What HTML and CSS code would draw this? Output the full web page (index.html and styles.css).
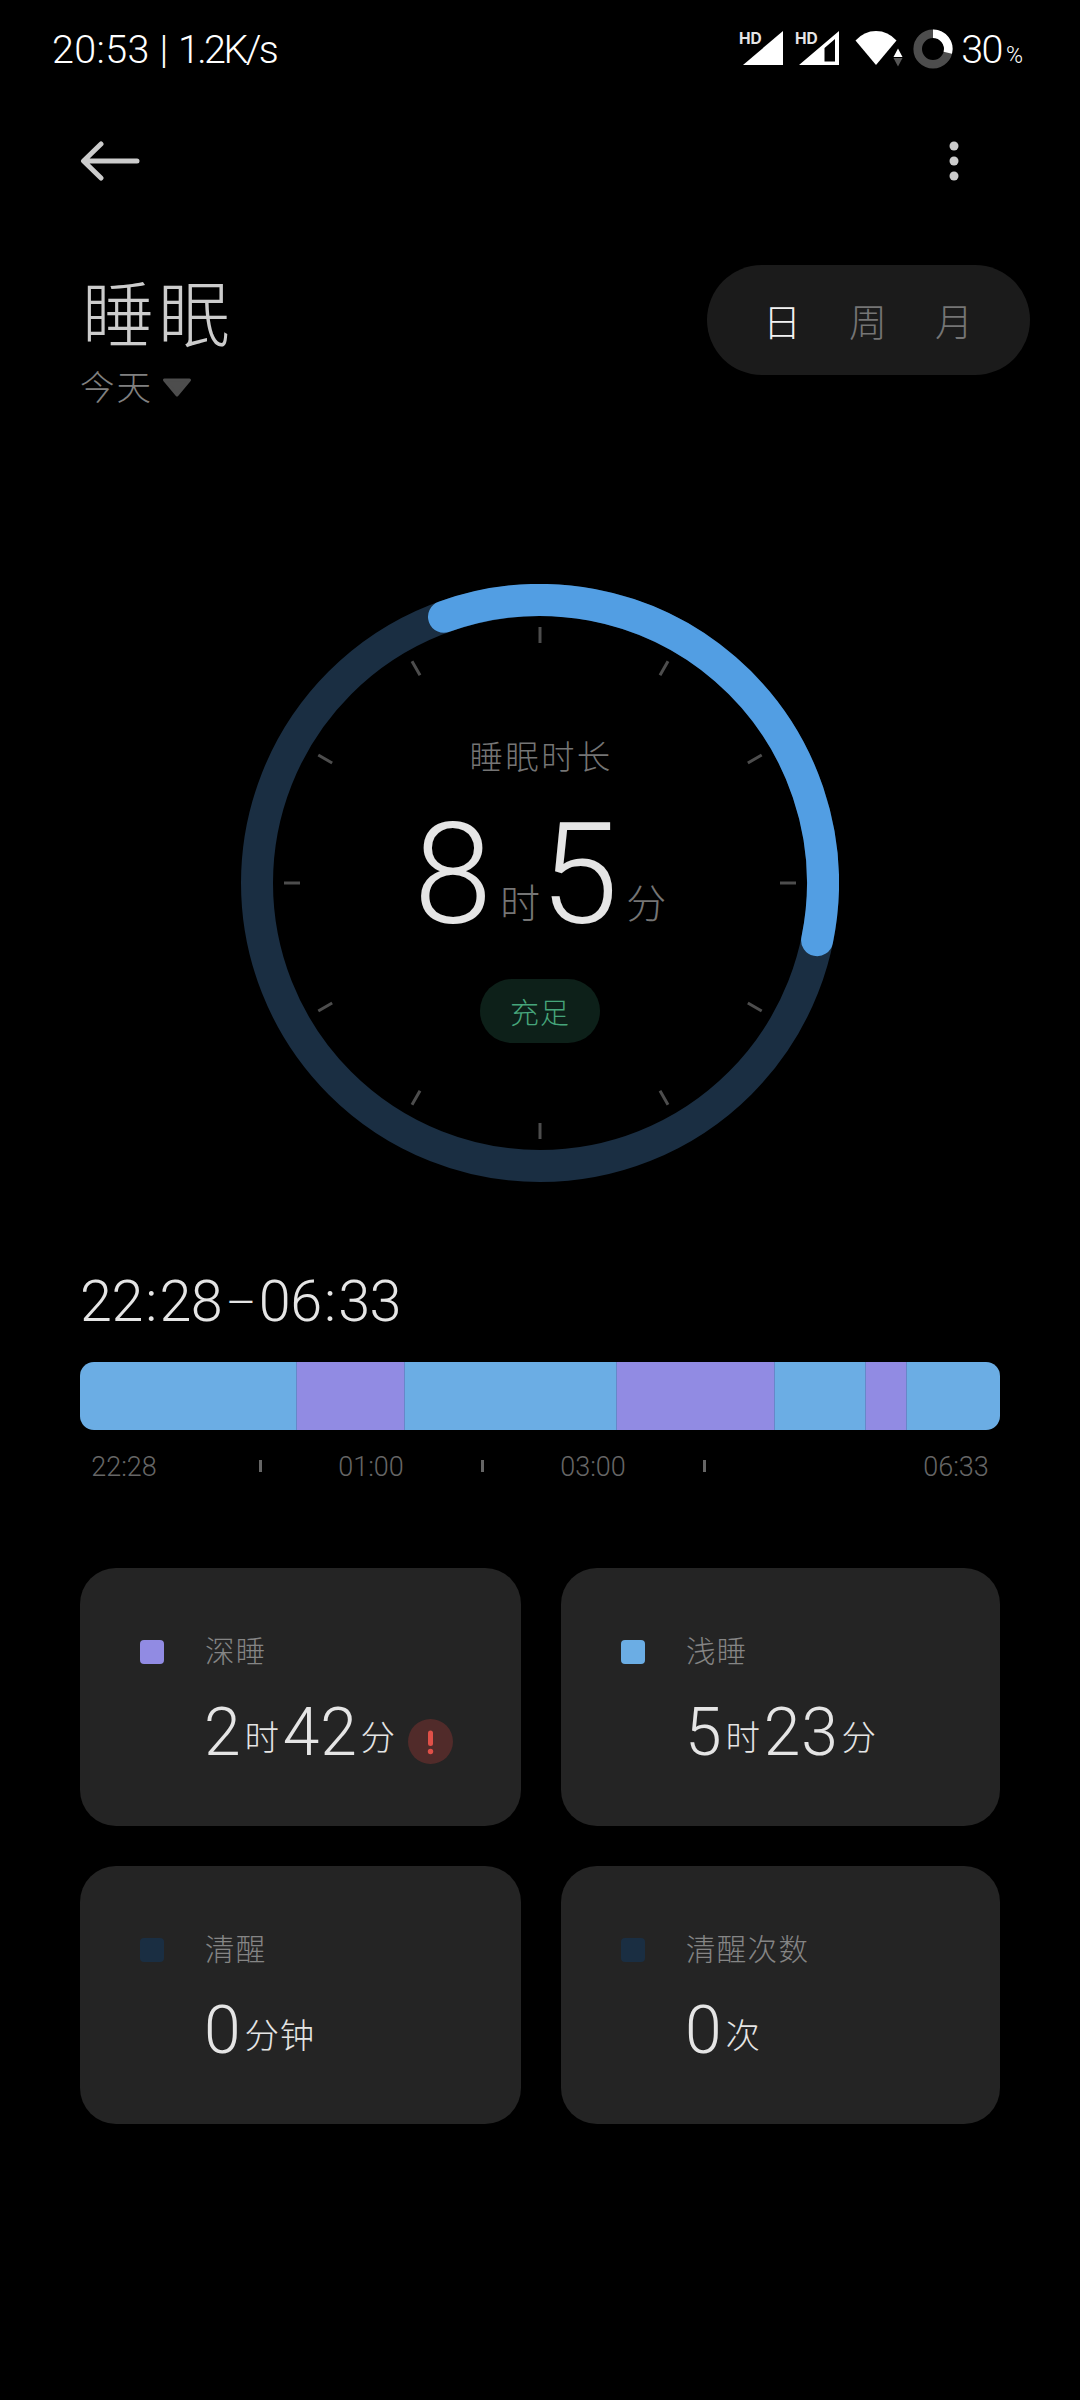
FILE: index.html
```
<!DOCTYPE html>
<html lang="zh-CN">
<head>
<meta charset="utf-8">
<title>睡眠</title>
<link rel="stylesheet" href="styles.css">
</head>
<body>
<div class="status">
  <span class="status-text"><span class="clock">20:53</span> | <span class="speed">1.2K/s</span></span>
  <div class="status-right">
    <svg class="status-icons" width="220" height="100" viewBox="736 0 220 100">
      <text class="hd" x="739" y="44">HD</text>
      <path d="M743 65H783V31Z" fill="#fff"/>
      <text class="hd" x="795" y="44">HD</text>
      <path d="M799 65H839V31ZM824.500 61.500V48L835 39V61.500Z" fill="#fff" fill-rule="evenodd"/>
      <path d="M876 65L855.5 40.5Q864 31 876 31T896.500 40.500Z" fill="#fff"/>
      <path d="M893.500 57L898 48.500L902.500 57Z" fill="#fff"/>
      <path d="M893.500 58L898 66.500L902.500 58Z" fill="#555"/>
      <circle cx="933" cy="49" r="15.300" fill="none" stroke="#4d4d4d" stroke-width="8.600"/>
      <path d="M933 33.700A15.300 15.300 0 0 1 947.800 52.800" fill="none" stroke="#fff" stroke-width="8.600"/>
    </svg>
    <span class="battery">30<small>%</small></span>
  </div>
</div>

<nav class="topbar">
  <svg width="60" height="44" viewBox="80 138.500 60 44"><path d="M101 143.500L83.500 160.500L101 177.500M84 160.500H137" fill="none" stroke="#ccc" stroke-width="5" stroke-linecap="round" stroke-linejoin="round"/></svg>
  <svg width="12" height="44" viewBox="0 0 12 44"><g fill="#ccc"><circle cx="6" cy="7" r="4.500"/><circle cx="6" cy="22" r="4.500"/><circle cx="6" cy="37" r="4.500"/></g></svg>
</nav>

<header class="header">
  <div>
    <h1 class="title">睡眠</h1>
    <div class="date">今天<svg width="30" height="20" viewBox="0 0 30 20"><path d="M2.500 2H27.500L15 17Z" fill="#4d4d4d" stroke="#4d4d4d" stroke-width="3" stroke-linejoin="round"/></svg></div>
  </div>
  <div class="tabs"><span class="tab tab-on">日</span><span class="tab">周</span><span class="tab">月</span></div>
</header>

<section class="dial">
  <svg class="ring" width="598" height="598" viewBox="-299 -299 598 598">
    <circle r="283" fill="none" stroke="#1a2e42" stroke-width="32"/>
    <path d="M-96 -266.200A283 283 0 0 1 277.100 57.200" fill="none" stroke="#529ee3" stroke-width="32" stroke-linecap="round"/>
    <g stroke="#4d4d4d" stroke-width="3">
      <path d="M0 -256V-240M0 240V256M-256 0H-240M240 0H256"/>
      <path d="M0 -256V-240M0 240V256M-256 0H-240M240 0H256" transform="rotate(30)"/>
      <path d="M0 -256V-240M0 240V256M-256 0H-240M240 0H256" transform="rotate(60)"/>
    </g>
  </svg>
  <div class="dial-body">
    <div class="dial-label">睡眠时长</div>
    <div class="dial-value">8<span class="unit">时</span>5<span class="unit">分</span></div>
    <div class="badge">充足</div>
  </div>
</section>

<section class="timeline">
  <div class="range">22<i>:</i>28<b>–</b>06<i>:</i>33</div>
  <div class="bar">
    <span class="seg light" style="width:216px"></span>
    <span class="seg deep" style="width:108px"></span>
    <span class="seg light" style="width:212px"></span>
    <span class="seg deep" style="width:158px"></span>
    <span class="seg light" style="width:91px"></span>
    <span class="seg deep" style="width:41px"></span>
    <span class="seg light" style="width:94px"></span>
  </div>
  <div class="axis">
    <span>22:28</span><span class="tick"></span><span>01:00</span><span class="tick"></span><span>03:00</span><span class="tick"></span><span>06:33</span>
  </div>
</section>

<section class="cards">
  <div class="card">
    <i class="dot deep"></i><div class="name">深睡</div>
    <div class="value"><span>2<small>时</small>42<small>分</small></span>
      <svg class="warn" width="45" height="45" viewBox="0 0 45 45"><circle cx="22.500" cy="22.500" r="22.500" fill="#512b2a"/><path d="M22.500 14V24.500" stroke="#e05048" stroke-width="5" stroke-linecap="round"/><circle cx="22.500" cy="32.500" r="2.700" fill="#e05048"/></svg>
    </div>
  </div>
  <div class="card">
    <i class="dot light"></i><div class="name">浅睡</div>
    <div class="value"><span>5<small>时</small>23<small>分</small></span></div>
  </div>
  <div class="card">
    <i class="dot awake"></i><div class="name">清醒</div>
    <div class="value"><span>0<small>分钟</small></span></div>
  </div>
  <div class="card">
    <i class="dot awake"></i><div class="name">清醒次数</div>
    <div class="value"><span>0<small>次</small></span></div>
  </div>
</section>
</body>
</html>
```
FILE: styles.css
```
* { box-sizing: border-box; }
body {
  margin: 0;
  width: 1080px;
  height: 2400px;
  overflow: hidden;
  background: #000;
  color: #e5e5e5;
  font-family: Roboto, "Noto Sans CJK SC", sans-serif;
  font-weight: 300;
}
svg { display: block; flex: none; }
i, b { font-style: normal; font-weight: inherit; }

.status {
  display: flex;
  justify-content: space-between;
  height: 100px;
  padding: 0 57px 0 52px;
  color: #fff;
  font-size: 39.5px;
  line-height: 99px;
}
.clock { letter-spacing: 0.4px; }
.speed { letter-spacing: -2.6px; }
.status-right { display: flex; height: 100px; }
.hd { font: 700 15.5px Inter, sans-serif; fill: #e5e5e5; }
.battery { padding-left: 5px; letter-spacing: -1.5px; }
.battery small { font-size: 23px; line-height: 1; padding-left: 4px; letter-spacing: 0; }

.topbar {
  display: flex;
  justify-content: space-between;
  align-items: center;
  height: 121px;
  padding: 0 120px 0 80px;
}

.header {
  display: flex;
  justify-content: space-between;
  align-items: flex-start;
  padding: 44px 50px 0 80px;
  height: 192px;
}
.title {
  margin: 0;
  padding: 6px 0 0 2px;
  color: #ccc;
  font-size: 72px;
  font-weight: 300;
  line-height: 92px;
  letter-spacing: 4px;
}
.date {
  display: flex;
  align-items: center;
  gap: 9px;
  margin-top: -3px;
  color: #808080;
  font-size: 34.5px;
  line-height: 56px;
  letter-spacing: 2px;
}
.tabs {
  display: flex;
  justify-content: center;
  width: 323px;
  height: 110px;
  padding-right: 1px;
  border-radius: 55px;
  background: #1b1b1b;
}
.tab {
  width: 86px;
  text-align: center;
  color: #757575;
  font-size: 38px;
  line-height: 117px;
  height: 110px;
}
.tab-on { color: #f2f2f2; }

.dial {
  display: grid;
  justify-content: center;
  margin-top: 171px;
}
.ring, .dial-body { grid-area: 1 / 1; }
.dial-body {
  display: flex;
  flex-direction: column;
  align-items: center;
  padding-top: 154px;
}
.dial-label {
  color: #757575;
  font-size: 33.5px;
  line-height: 40px;
  letter-spacing: 2.3px;
  margin-right: -2px;
}
.dial-value {
  margin-top: 36px;
  font-size: 141px;
  line-height: 121px;
  height: 120px;
  white-space: nowrap;
}
.unit {
  color: #757575;
  font-size: 40px;
  line-height: 1;
  margin-left: 8px;
  vertical-align: 5px;
}
.badge {
  display: flex;
  justify-content: center;
  width: 120px;
  height: 64px;
  margin-top: 45px;
  border-radius: 32px;
  background: #0d2019;
  color: #46a57b;
  font-size: 29px;
  line-height: 70px;
  letter-spacing: 1px;
}

.timeline { padding: 0 80px; margin-top: 81px; }
.range {
  height: 76px;
  font-size: 57.500px;
  line-height: 77px;
  letter-spacing: -0.5px;
}
.range i { padding: 0 2.5px; }
.range b { font-size: 47px; line-height: 1; padding: 0 3px 0 3.5px; vertical-align: 2px; }
.bar {
  display: flex;
  height: 68px;
  margin-top: 23px;
  border-radius: 14px;
  overflow: hidden;
}
.seg + .seg { box-shadow: inset 1px 0 0 #6787c9; }
.light { background: #6bade4; }
.deep { background: #918be3; }
.awake { background: #1a2e42; }
.axis {
  display: flex;
  gap: 23px;
  margin-top: 20px;
  color: #666;
  font-size: 27px;
  line-height: 34px;
  height: 34px;
}
.axis span { width: 88px; text-align: center; }
.axis span:first-child { margin-right: 25px; }
.axis span:last-child { margin-left: auto; }
.axis .tick {
  height: 12px;
  margin-top: 10px;
  background: linear-gradient(#666, #666) center / 3px 12px no-repeat;
}

.cards {
  display: grid;
  grid-template-columns: 441px 439px;
  grid-auto-rows: 258px;
  gap: 40px;
  padding: 0 80px;
  margin-top: 84px;
}
.card {
  display: grid;
  grid-template-columns: 24px 1fr;
  grid-template-rows: 40px 60px;
  column-gap: 40px;
  row-gap: 30px;
  padding: 64px 0 0 60px;
  border-radius: 36px;
  background: #242424;
}
.dot { width: 24px; height: 24px; margin-top: 8px; border-radius: 4px; }
.name {
  padding-left: 1px;
  color: #858585;
  font-size: 29.5px;
  line-height: 40px;
  letter-spacing: 1.3px;
}
.value {
  grid-column: 2;
  display: flex;
  align-items: center;
  font-size: 66px;
  line-height: 62px;
  white-space: nowrap;
}
.value span { height: 60px; letter-spacing: 0.8px; }
.value small {
  font-size: 34.5px;
  line-height: 1;
  margin: 0 3px;
  vertical-align: 5px;
}
.warn { margin: 19px 0 0 9px; }
```
